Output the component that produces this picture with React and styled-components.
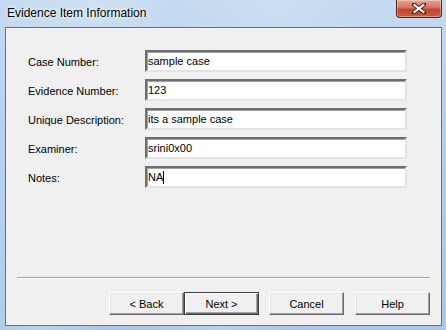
import React from "react";
import styled, { createGlobalStyle } from "styled-components";

const Global = createGlobalStyle`
  html, body { margin: 0; padding: 0; }
  body { width: 446px; height: 330px; overflow: hidden; background: #b9d1ea; }
`;

const Window = styled.div`
  width: 446px;
  height: 330px;
  box-sizing: border-box;
  display: flex;
  flex-direction: column;
  background:
    linear-gradient(100deg, rgba(255,255,255,0) 0%, rgba(255,255,255,0.18) 20%, rgba(255,255,255,0) 35%, rgba(255,255,255,0.15) 55%, rgba(255,255,255,0) 75%),
    linear-gradient(180deg, #c4daf0 0%, #b4cfea 40%, #a9c7e6 100%);
  padding: 0 4px 4px 5px;
`;

const TitleBar = styled.div`
  height: 27px;
  display: flex;
  align-items: flex-start;
  justify-content: space-between;
  flex-shrink: 0;
`;

const Title = styled.div`
  font-family: "Liberation Sans", Arial, sans-serif;
  font-size: 12px;
  color: #000;
  margin-top: 6px;
  margin-left: 2px;
  text-shadow: 0 0 6px rgba(255,255,255,0.9), 0 0 3px rgba(255,255,255,0.9);
`;

const CloseButton = styled.div`
  width: 46px;
  height: 18px;
  box-sizing: border-box;
  border: 1px solid #5b2119;
  border-top: none;
  border-radius: 0 0 4px 4px;
  background: linear-gradient(180deg, #e6a597 0%, #d7735f 45%, #c4432b 55%, #cf5b3f 100%);
  box-shadow: inset 0 0 0 1px rgba(255,255,255,0.35);
  display: flex;
  align-items: center;
  justify-content: center;
`;

const Client = styled.div`
  flex: 1;
  background: #f0f0f0;
  border: 1px solid #65737f;
  display: flex;
  flex-direction: column;
  padding: 22px 11px 10px 11px;
`;

const Form = styled.div`
  display: grid;
  grid-template-columns: 117px 262px;
  grid-auto-rows: 22px;
  row-gap: 7px;
  margin-left: 11px;
`;

const Label = styled.div`
  font-family: "Liberation Sans", Arial, sans-serif;
  font-size: 11px;
  color: #000;
  display: flex;
  align-items: center;
  padding-top: 1px;
`;

const Field = styled.div`
  box-sizing: border-box;
  background: #fff;
  border-top: 2px solid #6e6e6e;
  border-left: 2px solid #6e6e6e;
  border-right: 2px solid #e3e3e3;
  border-bottom: 2px solid #e3e3e3;
  box-shadow: inset 1px 1px 0 #a0a0a0;
  font-family: "Liberation Sans", Arial, sans-serif;
  font-size: 11px;
  color: #000;
  display: flex;
  align-items: center;
  padding-left: 1px;
  white-space: nowrap;
  overflow: hidden;
`;

const Caret = styled.span`
  display: inline-block;
  width: 1px;
  height: 13px;
  background: #000;
`;

const Spacer = styled.div`
  flex: 1;
`;

const Separator = styled.div`
  height: 0;
  border-top: 1px solid #a0a0a0;
  border-bottom: 1px solid #ffffff;
  margin: 1px 0 13px 0;
`;

const ButtonRow = styled.div`
  display: flex;
  justify-content: flex-end;
`;

const Button = styled.div`
  width: 75px;
  height: 23px;
  box-sizing: border-box;
  margin-left: ${(p) => p.$gap || 0}px;
  background: #f0f0f0;
  border-top: 1px solid #ffffff;
  border-left: 1px solid #ffffff;
  border-right: 1px solid #696969;
  border-bottom: 1px solid #696969;
  box-shadow: inset -1px -1px 0 #a0a0a0, inset 1px 1px 0 #e3e3e3;
  font-family: "Liberation Sans", Arial, sans-serif;
  font-size: 11px;
  color: #000;
  display: flex;
  align-items: center;
  justify-content: center;
  padding-top: 1px;
`;

const DefaultButton = styled(Button)`
  border: 1px solid #3c3c3c;
  box-shadow: inset 1px 1px 0 #ffffff, inset -1px -1px 0 #696969, inset -2px -2px 0 #a0a0a0;
`;

const fields = [
  ["Case Number:", "sample case"],
  ["Evidence Number:", "123"],
  ["Unique Description:", "its a sample case"],
  ["Examiner:", "srini0x00"],
  ["Notes:", "NA", true],
];

export default function App() {
  return (
    <>
      <Global />
      <Window>
        <TitleBar>
          <Title>Evidence Item Information</Title>
          <CloseButton>
            <svg width="14" height="11" viewBox="0 0 14 11">
              <path
                d="M2 1.5 L12 9.5 M12 1.5 L2 9.5"
                stroke="#3d1a14"
                strokeWidth="4"
                strokeLinecap="square"
              />
              <path
                d="M2.5 2 L11.5 9 M11.5 2 L2.5 9"
                stroke="#ffffff"
                strokeWidth="2.2"
                strokeLinecap="square"
              />
            </svg>
          </CloseButton>
        </TitleBar>
        <Client>
          <Form>
            {fields.map(([label, value, caret]) => (
              <React.Fragment key={label}>
                <Label>{label}</Label>
                <Field>
                  {value}
                  {caret && <Caret />}
                </Field>
              </React.Fragment>
            ))}
          </Form>
          <Spacer />
          <Separator />
          <ButtonRow>
            <Button>&lt; Back</Button>
            <DefaultButton>Next &gt;</DefaultButton>
            <Button $gap={10}>Cancel</Button>
            <Button $gap={11}>Help</Button>
          </ButtonRow>
        </Client>
      </Window>
    </>
  );
}
